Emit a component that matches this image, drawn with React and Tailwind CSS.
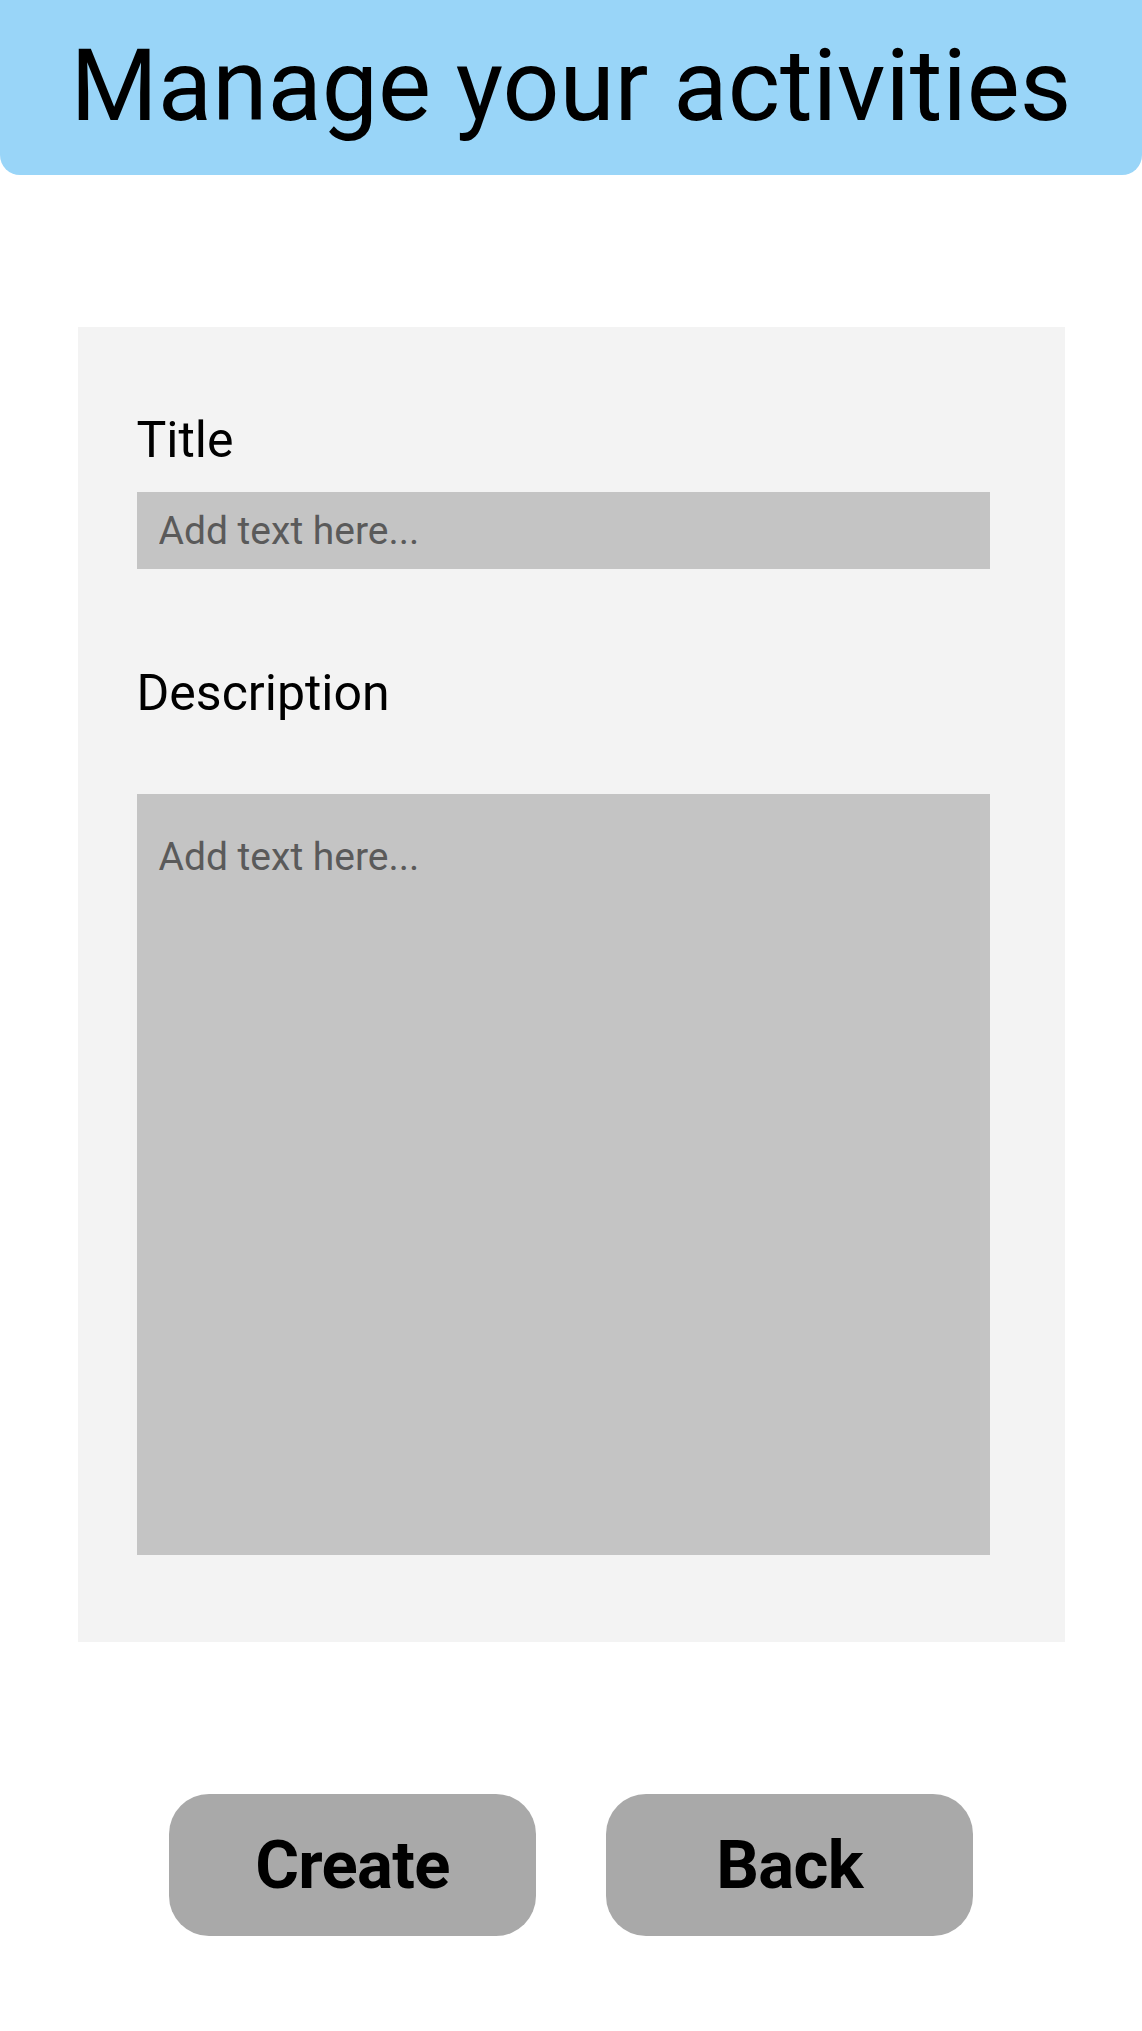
import React from 'react';

const ActivityForm = () => {
    return (
        <div className="min-h-[2031px] w-full bg-white font-['Roboto',_sans-serif] text-black">
            {/* Header */}
            <div className="h-[175px] w-full bg-[#99d5f8] rounded-b-[20px] flex items-center justify-center">
                <h1 className="text-[100px] leading-none font-normal -mt-[3px]">Manage your activities</h1>
            </div>

            {/* Form card */}
            <div className="mx-auto mt-[152px] w-[987px] bg-[#f3f3f3] pl-[59px] pr-[75px] pt-[88px] pb-[87px]">
                <label className="block text-[50px] leading-none">Title</label>
                <input
                    type="text"
                    placeholder="Add text here..."
                    className="mt-[27px] block h-[77px] w-full bg-[#c4c4c4] px-[22px] text-[39px] outline-none placeholder:text-[#5a5a5a]"
                />

                <label className="mt-[99px] block text-[50px] leading-none">Description</label>
                <textarea
                    placeholder="Add text here..."
                    className="mt-[76px] block h-[761px] w-full resize-none bg-[#c4c4c4] px-[22px] pt-[34px] text-[39px] outline-none placeholder:text-[#5a5a5a]"
                />
            </div>

            {/* Actions */}
            <div className="mt-[152px] flex justify-center gap-[70px]">
                <button className="flex h-[142px] w-[367px] items-center justify-center rounded-[40px] bg-[#a9a9a9] text-[67px] font-bold tracking-[-0.01em]">
                    Create
                </button>
                <button className="flex h-[142px] w-[367px] items-center justify-center rounded-[40px] bg-[#a9a9a9] text-[67px] font-bold tracking-[-0.01em]">
                    Back
                </button>
            </div>
        </div>
    );
};

export default function App() {
    return <ActivityForm />;
}
